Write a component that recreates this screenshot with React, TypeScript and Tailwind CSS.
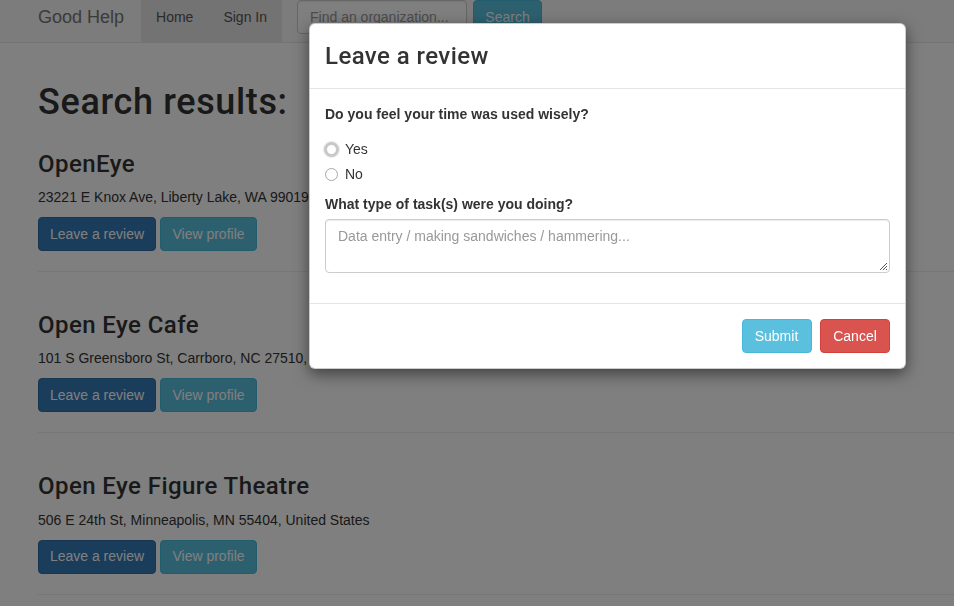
const results = [
  { name: "OpenEye", address: "23221 E Knox Ave, Liberty Lake, WA 99019, United States" },
  { name: "Open Eye Cafe", address: "101 S Greensboro St, Carrboro, NC 27510, United States" },
  { name: "Open Eye Figure Theatre", address: "506 E 24th St, Minneapolis, MN 55404, United States" },
];

const heading = "font-['Roboto','Liberation_Sans',sans-serif] font-medium tracking-[0.018em]";

function Navbar() {
  return (
    <nav className="-mt-[8px] flex h-[51px] items-start border-b border-[#e7e7e7] bg-[#f8f8f8]">
      <a className="ml-[38px] mt-[15px] text-[18px] leading-[20px] text-[#777]">Good Help</a>
      <ul className="ml-[17px] flex h-[50px] bg-[#e7e7e7]">
        <li className="px-[15px] pt-[15px] text-[14px] leading-[20px] text-[#555]">Home</li>
        <li className="px-[15px] pt-[15px] text-[14px] leading-[20px] text-[#555]">Sign In</li>
      </ul>
      <div className="ml-[15px] mt-[8px] flex gap-[6px]">
        <div className="flex h-[34px] w-[170px] items-center rounded-[4px] border border-[#ccc] bg-white px-[12px] text-[14px] text-[#999] shadow-[inset_0_1px_1px_rgba(0,0,0,0.075)]">
          Find an organization...
        </div>
        <button className="h-[34px] w-[69px] rounded-[4px] border border-[#46b8da] bg-[#5bc0de] text-[14px] text-white">
          Search
        </button>
      </div>
    </nav>
  );
}

function Result({ name, address }: { name: string; address: string }) {
  return (
    <div className="flex flex-col">
      <h3 className={`mt-[20px] text-[24px] leading-[26.4px] text-[#333] ${heading}`}>{name}</h3>
      <p className="mt-[10px] text-[14px] leading-[20px] text-[#333]">{address}</p>
      <div className="mt-[10px] flex gap-[4px]">
        <button className="h-[34px] w-[118px] rounded-[4px] border border-[#2e6da4] bg-[#337ab7] text-[14px] text-white">
          Leave a review
        </button>
        <button className="h-[34px] w-[97px] rounded-[4px] border border-[#46b8da] bg-[#5bc0de] text-[14px] text-white">
          View profile
        </button>
      </div>
      <hr className="mt-[20px] mb-[20px] border-t border-[#eee]" />
    </div>
  );
}

function Radio({ label, focused }: { label: string; focused?: boolean }) {
  return (
    <div className="flex h-[20px] items-center text-[14px] leading-[20px] text-[#333]">
      <span className="flex w-[20px] items-center">
        {focused ? (
          <span className="ml-[-1px] h-[15px] w-[15px] rounded-full border-[3px] border-[#c8c8c8] bg-white shadow-[0_0_1px_1px_rgba(0,0,0,0.08)]" />
        ) : (
          <span className="h-[13px] w-[13px] rounded-full border border-[#a8a8a8] bg-white" />
        )}
      </span>
      {label}
    </div>
  );
}

function ReviewModal() {
  return (
    <div className="absolute left-[309px] top-[23px] w-[597px] rounded-[6px] border border-black/20 bg-white shadow-[0_5px_15px_rgba(0,0,0,0.5)]">
      <div className="border-b border-[#e5e5e5] p-[15px]">
        <h3 className={`text-[24px] leading-[34.3px] text-[#333] ${heading}`}>Leave a review</h3>
      </div>
      <div className="flex flex-col p-[15px]">
        <label className="text-[14px] font-bold leading-[20px] text-[#333]">
          Do you feel your time was used wisely?
        </label>
        <div className="mt-[15px] flex flex-col gap-[5px]">
          <Radio label="Yes" focused />
          <Radio label="No" />
        </div>
        <label className="mt-[10px] text-[14px] font-bold leading-[20px] text-[#333]">
          What type of task(s) were you doing?
        </label>
        <div className="relative mt-[5px] h-[54px] w-full rounded-[4px] border border-[#ccc] px-[12px] py-[6px] text-[14px] leading-[20px] text-[#999] shadow-[inset_0_1px_1px_rgba(0,0,0,0.075)]">
          Data entry / making sandwiches / hammering...
          <svg className="absolute bottom-[2px] right-[2px]" width="8" height="8" viewBox="0 0 8 8">
            <path d="M1 8 L8 1 M4 8 L8 4 M7 8 L8 7" stroke="#555" strokeWidth="1" />
          </svg>
        </div>
        <div className="h-[15px]" />
      </div>
      <div className="flex justify-end gap-[8.5px] border-t border-[#e5e5e5] p-[15px]">
        <button className="h-[34px] w-[70px] rounded-[4px] border border-[#46b8da] bg-[#5bc0de] text-[14px] text-white">
          Submit
        </button>
        <button className="h-[34px] w-[70px] rounded-[4px] border border-[#d43f3a] bg-[#d9534f] text-[14px] text-white">
          Cancel
        </button>
      </div>
    </div>
  );
}

export default function App() {
  return (
    <div className="relative min-h-screen overflow-hidden bg-white font-['Liberation_Sans',Arial,sans-serif]">
      <Navbar />
      <main className="flex flex-col pl-[38px]">
        <h1 className={`mt-[40px] mb-[8px] text-[36px] leading-[39.6px] text-[#333] ${heading}`}>Search results:</h1>
        {results.map((r) => (
          <Result key={r.name} name={r.name} address={r.address} />
        ))}
      </main>
      <div className="fixed inset-0 bg-black/50" />
      <ReviewModal />
    </div>
  );
}
